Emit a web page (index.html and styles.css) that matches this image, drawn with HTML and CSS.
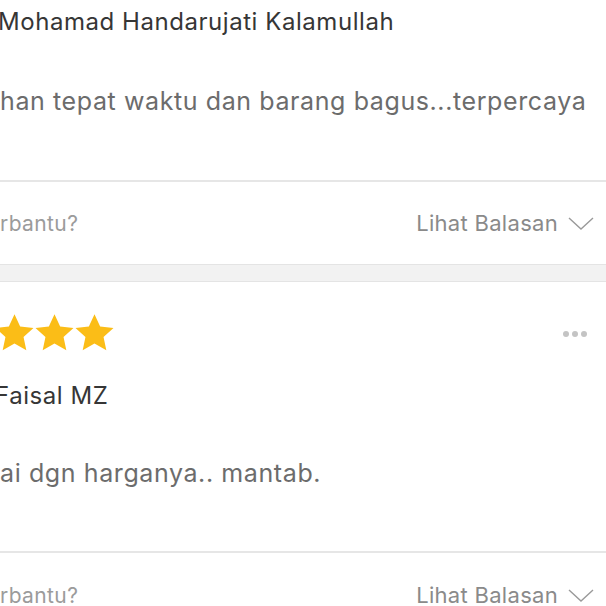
FILE: index.html
```html
<!DOCTYPE html>
<html lang="id">
<head>
<meta charset="utf-8">
<title>Ulasan</title>
<link rel="stylesheet" href="styles.css">
</head>
<body>
<div class="page">
  <section class="review review-first">
    <div class="review-body">
      <div class="reviewer">Mohamad Handarujati Kalamullah</div>
      <p class="review-text">han tepat waktu dan barang bagus...terpercaya</p>
    </div>
    <div class="review-footer">
      <span class="helpful">rbantu?</span>
      <span class="replies">Lihat Balasan
        <svg class="chevron" viewBox="0 0 26 13" width="26" height="13"><path d="M1 1 L13 12 L25 1" fill="none" stroke="#9a9a9a" stroke-width="1.4"/></svg>
      </span>
    </div>
  </section>
  <div class="separator"></div>
  <section class="review review-second">
    <div class="review-body">
      <div class="review-top">
        <div class="stars">
          <svg viewBox="0 0 24 24" width="43" height="43"><path d="M12 1.3l3.15 6.85 7.45.8-5.55 5.05 1.55 7.35L12 17.6l-6.6 3.75 1.55-7.35L1.4 8.95l7.45-.8z" fill="#fbbd17"/></svg>
          <svg viewBox="0 0 24 24" width="43" height="43"><path d="M12 1.3l3.15 6.85 7.45.8-5.55 5.05 1.55 7.35L12 17.6l-6.6 3.75 1.55-7.35L1.4 8.95l7.45-.8z" fill="#fbbd17"/></svg>
          <svg viewBox="0 0 24 24" width="43" height="43"><path d="M12 1.3l3.15 6.85 7.45.8-5.55 5.05 1.55 7.35L12 17.6l-6.6 3.75 1.55-7.35L1.4 8.95l7.45-.8z" fill="#fbbd17"/></svg>
        </div>
        <div class="more"><span></span><span></span><span></span></div>
      </div>
      <div class="reviewer reviewer-2">Faisal MZ</div>
      <p class="review-text">ai dgn harganya.. mantab.</p>
    </div>
    <div class="review-footer">
      <span class="helpful">rbantu?</span>
      <span class="replies">Lihat Balasan
        <svg class="chevron" viewBox="0 0 26 13" width="26" height="13"><path d="M1 1 L13 12 L25 1" fill="none" stroke="#9a9a9a" stroke-width="1.4"/></svg>
      </span>
    </div>
  </section>
</div>
</body>
</html>
```
FILE: styles.css
```css
html, body {
  margin: 0;
  padding: 0;
  background: #fff;
  overflow: hidden;
}
.page {
  width: 606px;
  height: 606px;
  overflow: hidden;
  font-family: Inter, "Noto Sans", sans-serif;
}
.review {
  background: #fff;
}
.review-body {
  padding: 0 12px 0 0;
}
.review-first .review-body {
  padding-top: 7px;
}
.reviewer {
  font-size: 24px;
  line-height: 30px;
  color: #363636;
  margin-left: -2px;
  letter-spacing: 0.55px;
  white-space: nowrap;
}
.review-text {
  margin: 49px 0 0 0;
  font-size: 25px;
  line-height: 30px;
  color: #6c6c6c;
  letter-spacing: 0.6px;
  white-space: nowrap;
}
.review-second .review-text {
  margin-top: 47px;
}
.review-footer {
  margin-top: 64px;
  border-top: 2px solid #e6e6e6;
  height: 84px;
  display: flex;
  align-items: center;
  justify-content: space-between;
  padding: 0 12px 0 0;
  box-sizing: border-box;
}
.review-second .review-footer {
  margin-top: 63px;
  padding-top: 2px;
}
.helpful {
  font-size: 21px;
  color: #9b9b9b;
  letter-spacing: 0.4px;
}
.replies {
  font-size: 22px;
  color: #8a8a8a;
  display: flex;
  align-items: center;
  gap: 10px;
  letter-spacing: 0.3px;
}
.chevron {
  display: block;
}
.separator {
  height: 16px;
  background: #f2f2f2;
  border-top: 1px solid #e4e4e4;
  border-bottom: 1px solid #e4e4e4;
}
.review-top {
  padding-top: 30px;
  height: 43px;
  display: flex;
  justify-content: space-between;
  align-items: center;
}
.stars {
  display: flex;
  margin-left: -7px;
}
.stars svg {
  display: block;
  margin-right: -3px;
}
.more {
  display: flex;
  gap: 3px;
  margin-right: 7px;
}
.more span {
  width: 6px;
  height: 6px;
  border-radius: 50%;
  background: #c4c4c4;
}
.reviewer-2 {
  margin-top: 26px;
  margin-left: -5px;
}
```
